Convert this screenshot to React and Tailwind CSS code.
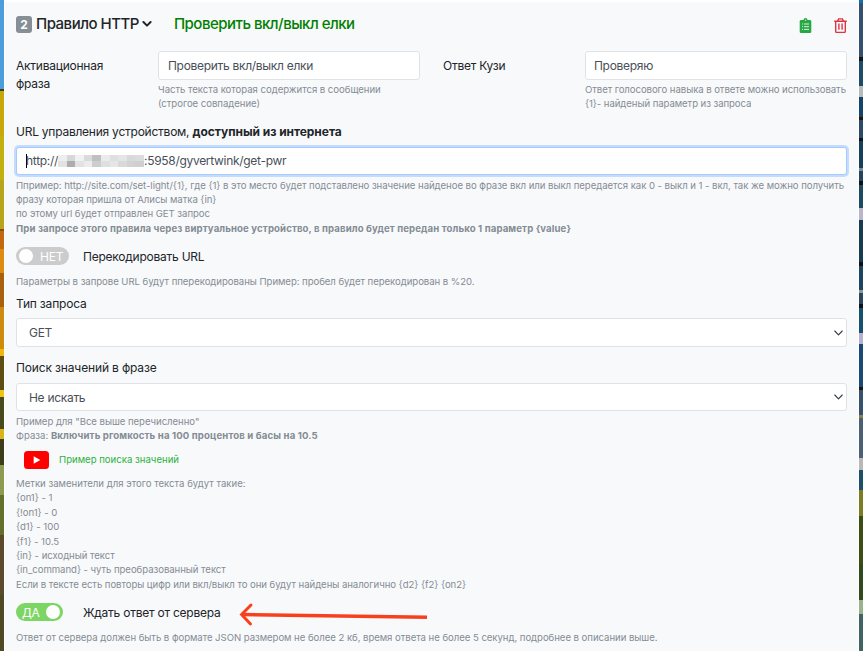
import React from "react";

const LEFT = [
  [89, "bg-[#4b9ddb]"], [2, "bg-[#3d3d22]"], [45, "bg-[#c9a70b]"], [44, "bg-[#c2b00e]"],
  [49, "bg-[#b9a51c]"], [2, "bg-[#8a4a10]"], [18, "bg-[#c4690f]"], [24, "bg-[#dd8c12]"],
  [34, "bg-[#a8620f]"], [42, "bg-[#cf8a10]"], [7, "bg-[#f0b80c]"], [34, "bg-[#5d4f14]"],
  [7, "bg-[#f0c414]"], [32, "bg-[#474a1d]"], [10, "bg-[#d9b51c]"], [26, "bg-[#3c3d1a]"],
  [30, "bg-[#8c9a52]"], [40, "bg-[#63702b]"], [60, "bg-[#5c4a2c]"], [56, "bg-[#4f4a24]"],
];
const RIGHT = [
  [3, "bg-[#1670b0]"], [54, "bg-[#33506e]"], [4, "bg-[#10161c]"], [25, "bg-[#1f4a68]"],
  [11, "bg-[#b4bcbf]"], [20, "bg-[#164468]"], [3, "bg-[#20180f]"], [18, "bg-[#2a4a68]"],
  [3, "bg-[#101418]"], [27, "bg-[#15405c]"], [3, "bg-[#7d8a92]"], [10, "bg-[#254462]"],
  [4, "bg-[#0e1218]"], [23, "bg-[#1d4a62]"], [12, "bg-[#b9b6cc]"], [42, "bg-[#163c54]"],
  [4, "bg-[#0e1218]"], [24, "bg-[#1d4561]"], [3, "bg-[#8d989e]"], [11, "bg-[#2a4560]"],
  [4, "bg-[#0e1218]"], [25, "bg-[#155070]"], [11, "bg-[#b4b2cc]"], [43, "bg-[#174a74]"],
  [3, "bg-[#15161a]"], [25, "bg-[#365070]"], [3, "bg-[#8a8148]"], [40, "bg-[#4a6074]"],
  [12, "bg-[#b6b9b8]"], [20, "bg-[#1b5068]"], [26, "bg-[#7a7d23]"], [48, "bg-[#3a4d17]"],
  [36, "bg-[#2f4a1c]"], [14, "bg-[#9ab38c]"], [37, "bg-[#3f6464]"],
];

function Strip({ bands }) {
  return (
    <div className="w-[4px] h-full shrink-0 overflow-hidden flex flex-col">
      {bands.map(([h, c], i) => (
        <div key={i} className={"shrink-0 w-full " + c} style={{ height: h }} />
      ))}
    </div>
  );
}

function Small({ children, color = "text-[#848c94]", className = "tracking-[-0.05px]" }) {
  return (
    <div className={"text-[9.6px] leading-[14.4px] whitespace-nowrap " + color + " " + className}>
      {children}
    </div>
  );
}

function Field({ children, className = "px-[9px] border-[#dfe3e8]" }) {
  return (
    <div className={"h-[28.5px] shrink-0 rounded-[3px] border bg-white flex items-center text-[12px] tracking-[-0.3px] text-[#495057] whitespace-nowrap " + className}>
      {children}
    </div>
  );
}

function Select({ children }) {
  return (
    <Field className="justify-between pl-[12px] pr-[3px] border-[#dfe3e8]">
      <span className="pt-px">{children}</span>
      <svg width="9" height="6" viewBox="0 0 9 6" fill="none" stroke="#343a40" strokeWidth="1.1" strokeLinecap="round" strokeLinejoin="round">
        <path d="M.8 1l3.7 3.8L8.2 1" />
      </svg>
    </Field>
  );
}

const MOSAIC = [
  ["bg-[#eeeeee]", "bg-[#e2e2e3]"], ["bg-[#d8d8da]", "bg-[#adadb0]"], ["bg-[#f1f1f1]", "bg-[#e2e2e2]"],
  ["bg-[#dadadb]", "bg-[#ececec]"], ["bg-[#c0c0c3]", "bg-[#cdcdcf]"], ["bg-[#ebebeb]", "bg-[#dedfe0]"],
  ["bg-[#dfdfe0]", "bg-[#e6e6e7]"], ["bg-[#e5e5e6]", "bg-[#d9d9da]"], ["bg-[#d9d9db]", "bg-[#d2d2d4]"],
  ["bg-[#dcdcdd]", "bg-[#cfcfd1]"],
];

export default function App() {
  return (
    <div className="w-[863px] h-[651px] overflow-hidden flex bg-white text-[#212529] font-['Inter','Liberation_Sans',sans-serif] text-[12px] leading-[18px] tracking-[-0.24px]">
      <Strip bands={LEFT} />
      <main className="relative flex-1 min-w-0 mt-[2px] ml-px bg-[#f8f9fb] px-[11px] flex flex-col">
        <header className="h-[49px] shrink-0 flex items-start pt-[13px] whitespace-nowrap">
          <span className="mt-[1px] w-[16px] h-[17px] rounded-[3px] bg-[#868e96] text-white font-bold text-[12px] leading-[17px] text-center">2</span>
          <span className="ml-[4px] text-[15px] leading-[18px] font-medium tracking-[-0.5px]">Правило HTTP</span>
          <svg className="ml-[3px] mt-[5px]" width="10" height="8" viewBox="0 0 10 8" fill="none" stroke="#212529" strokeWidth="2" strokeLinecap="round" strokeLinejoin="round">
            <path d="M1.4 2l3.6 3.6L8.6 2" />
          </svg>
          <span className="ml-[22px] text-[15px] leading-[18px] font-medium tracking-[-0.5px] text-[#008000]">Проверить вкл/выкл елки</span>
          <div className="ml-auto mt-[3px] flex gap-[22px]">
            <svg width="13" height="16" viewBox="0 0 13 16">
              <path fill="#28a745" d="M2 2h2.5a2 2 0 0 1 4 0H11a1.3 1.3 0 0 1 1.3 1.3v10.4A1.3 1.3 0 0 1 11 15H2a1.3 1.3 0 0 1-1.3-1.3V3.3A1.3 1.3 0 0 1 2 2z" />
              <circle cx="6.5" cy="2.1" r=".7" fill="#f8f9fb" />
              <path stroke="#d9f2df" strokeWidth="1" d="M3 6h1M5 6h5M3 8.7h1M5 8.7h5M3 11.4h1M5 11.4h5" />
            </svg>
            <svg width="13" height="16" viewBox="0 0 13 16" fill="none" stroke="#dc3545" strokeWidth="1.4">
              <path d="M.2 3.2h12.6M3.6 3l1-2.1h3.8l1 2.1M1.7 3.4v10.2q0 .8.8.8h8q.8 0 .8-.8V3.4M4.9 5.6v6.2M8.1 5.6v6.2" />
            </svg>
          </div>
        </header>

        <div className="h-[72px] shrink-0 flex">
          <div className="w-[142px] shrink-0 pt-[6px]">Активационная<br />фраза</div>
          <div className="w-[262px] shrink-0">
            <Field><span className="pt-px">Проверить вкл/выкл елки</span></Field>
            <Small className="mt-[3px] tracking-[-0.04px]">Часть текста которая содержится в сообщении<br />(строгое совпадение)</Small>
          </div>
          <div className="w-[142px] shrink-0 pt-[6px] ml-[23px]">Ответ Кузи</div>
          <div className="w-[262px] shrink-0">
            <Field className="px-[8px] border-[#dfe3e8]"><span className="pt-px">Проверяю</span></Field>
            <Small className="mt-[3px] tracking-[-0.07px]">Ответ голосового навыка в ответе можно использовать<br />{"{1}- найденый параметр из запроса"}</Small>
          </div>
        </div>

        <div className="h-[23.5px] shrink-0 whitespace-nowrap">URL управления устройством, <b className="tracking-[-0.05px]">доступный из интернета</b></div>
        <Field className="px-[9px] border-[#a3cbff] ring-2 ring-[#c5dcff]">
          <span className="w-px h-[14px] -mr-px bg-black" />
          <span>http://</span>
          <span className="flex w-[86px] h-[12px]">
            {MOSAIC.map(([a, b], i) => (
              <span key={i} className="flex-1 flex flex-col">
                <span className={"flex-1 " + a} />
                <span className={"flex-1 " + b} />
              </span>
            ))}
          </span>
          <span>:5958/gyvertwink/get-pwr</span>
        </Field>
        <div className="h-[72px] shrink-0 pt-[3.6px]">
          <Small>{"Ппример: http://site.com/set-light/{1}, где {1} в это место будет подставлено значение найденое во фразе вкл или выкл передается как 0 - выкл и 1 - вкл, так же можно получить"}</Small>
          <Small>{"фразу которая пришла от Алисы матка {in}"}</Small>
          <Small>по этому url будет отправлен GET запрос</Small>
          <Small className="font-bold tracking-[0.115px]">{"При запросе этого правила через виртуальное устройство, в правило будет передан только 1 параметр {value}"}</Small>
        </div>

        <div className="h-[28px] shrink-0 flex items-start">
          <div className="w-[53px] h-[18px] rounded-full bg-[#cccccc] flex items-center pl-[3px] text-white">
            <span className="size-[14px] rounded-full bg-white" />
            <span className="ml-[7px] pt-px">НЕТ</span>
          </div>
          <span className="ml-[14px] pt-px">Перекодировать URL</span>
        </div>
        <Small>Параметры в запрове URL будут пперекодированы Пример: пробел будет перекодирован в %20.</Small>
        <div className="h-[29px] shrink-0 pt-[6px] tracking-[-0.18px]">Тип запроса</div>
        <Select>GET</Select>
        <div className="h-[36px] shrink-0 pt-[12.5px] tracking-[-0.15px]">Поиск значений в фразе</div>
        <Select>Не искать</Select>
        <div className="h-[39.6px] shrink-0 pt-[3.6px]">
          <Small>Пример для "Все выше перечисленно"</Small>
          <Small className="tracking-normal">Фраза: <b className="tracking-[0.13px]">Включить ргомкость на 100 процентов и басы на 10.5</b></Small>
        </div>
        <div className="h-[26px] shrink-0 flex items-start pl-[8px]">
          <svg width="25" height="18" viewBox="0 0 25 18">
            <rect width="25" height="18" rx="3.5" fill="#fe0000" />
            <path d="M9.7 5.3v7.4L16.3 9z" fill="#fff" />
          </svg>
          <Small color="text-[#2bb240]" className="ml-[10px] mt-[1.5px] tracking-normal">Пример поиска значений</Small>
        </div>
        <div className="h-[126px] shrink-0">
          <Small className="tracking-normal">Метки заменители для этого текста будут такие:</Small>
          <Small>{"{on1} - 1"}</Small>
          <Small>{"{!on1} - 0"}</Small>
          <Small>{"{d1} - 100"}</Small>
          <Small>{"{f1} - 10.5"}</Small>
          <Small>{"{in} - исходный текст"}</Small>
          <Small>{"{in_command} - чуть преобразованный текст"}</Small>
          <Small className="tracking-[-0.06px]">{"Если в тексте есть повторы цифр или вкл/выкл то они будут найдены аналогично {d2} {f2} {on2}"}</Small>
        </div>
        <div className="h-[28px] shrink-0 flex items-start">
          <div className="w-[47px] h-[18px] rounded-full bg-[#7dd565] flex items-center justify-between pl-[6px] pr-[3px] text-white">
            <span className="pt-px">ДА</span>
            <span className="size-[14px] rounded-full bg-white" />
          </div>
          <span className="ml-[20px] pt-px">Ждать ответ от сервера</span>
        </div>
        <Small>Ответ от сервера должен быть в формате JSON размером не более 2 кб, время ответа не более 5 секунд, подробнее в описании выше.</Small>
        <svg className="absolute left-[233px] top-[599px]" width="192" height="26" viewBox="0 0 192 26" fill="none" stroke="#f9401d">
          <path d="M4 13.5L189 16.3" strokeWidth="3.4" />
          <path d="M13 4L3.6 13.5L12.5 23" strokeWidth="3" strokeLinecap="round" />
        </svg>
      </main>
      <div className="w-px shrink-0" />
      <Strip bands={RIGHT} />
    </div>
  );
}
